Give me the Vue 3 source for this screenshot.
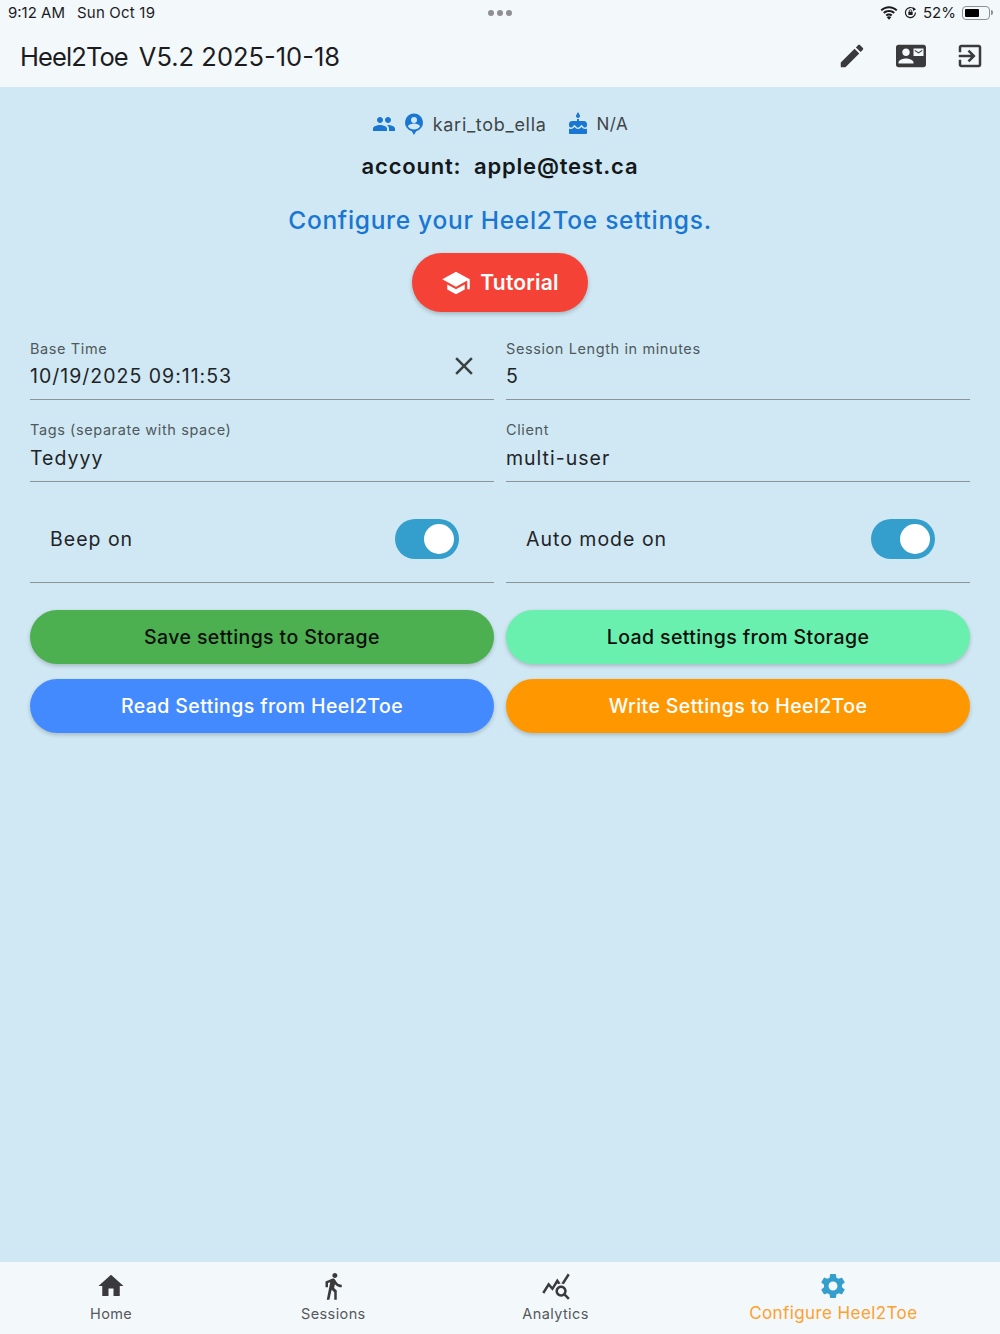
<template>
  <div class="screen">
    <header class="top">
      <div class="status">
        <div class="status-left">
          <span>9:12 AM</span>
          <span class="date">Sun Oct 19</span>
        </div>
        <div class="dots"><i></i><i></i><i></i></div>
        <div class="status-right">
          <svg class="wifi" viewBox="0 0 20 15" width="18" height="14">
            <path d="M10 2.2c3 0 5.800 1.200 7.900 3.200l1.500-1.600C16.900 1.400 13.600 0 10 0S3.100 1.400.6 3.800l1.500 1.600C4.200 3.400 7 2.200 10 2.200z" />
            <path d="M10 6.300c1.900 0 3.700.7 5 2l1.500-1.600C14.800 5 12.500 4.100 10 4.100S5.200 5 3.500 6.700L5 8.300c1.300-1.300 3.100-2 5-2z" />
            <path d="M10 10.200c.9 0 1.700.3 2.300.9l1.500-1.600c-1-1-2.300-1.500-3.800-1.500s-2.800.5-3.800 1.500l1.500 1.600c.6-.6 1.400-.9 2.300-.9z" />
            <path d="M7.500 12.200 10 15l2.500-2.800c-.6-.6-1.500-1-2.500-1s-1.900.4-2.500 1z" />
          </svg>
          <svg class="lock" viewBox="0 0 14 14" width="13" height="13">
            <path d="M12.300 7A5.400 5.400 0 1 1 10.700 3.200" fill="none" stroke="#1c1c1e" stroke-width="1.300" />
            <path d="M9.400 1.200 13 3.400 9.800 5.400z" fill="#1c1c1e" />
            <rect x="4.700" y="6.300" width="4.600" height="3.500" rx=".5" fill="#1c1c1e" />
            <path d="M5.600 6.500V5.500a1.400 1.400 0 0 1 2.800 0v1" fill="none" stroke="#1c1c1e" stroke-width=".9" />
          </svg>
          <span class="pct">52%</span>
          <div class="battery"><b></b></div>
          <div class="nub"></div>
        </div>
      </div>
      <div class="appbar">
        <h1><span class="brand">Heel2Toe</span><span>V5.2 2025-10-18</span></h1>
        <div class="actions">
          <svg viewBox="0 0 24 24" width="30" height="30"><path :d="icons.edit" /></svg>
          <svg viewBox="0 0 24 24" width="30" height="30"><path :d="icons.contact" /></svg>
          <svg viewBox="0 0 24 24" width="30" height="30"><path :d="icons.exit" /></svg>
        </div>
      </div>
    </header>

    <main class="content">
      <div class="user-row">
        <svg viewBox="0 0 24 24" width="24" height="24"><path :d="icons.people" /></svg>
        <svg viewBox="0 0 24 24" width="24" height="24" class="pin"><path fill-rule="evenodd" :d="icons.pin" /></svg>
        <span class="user-name">kari_tob_ella</span>
        <svg viewBox="0 0 24 24" width="24" height="24" class="cake"><path :d="icons.cake" /></svg>
        <span class="user-age">N/A</span>
      </div>
      <div class="account">account:&nbsp; apple@test.ca</div>
      <div class="configure">Configure your Heel2Toe settings.</div>
      <button type="button" class="tutorial">
        <svg viewBox="0 0 24 24" width="30" height="30"><path :d="icons.school" /></svg>
        <span>Tutorial</span>
      </button>

      <div class="form">
        <div v-for="field in fields" :key="field.label" class="field">
          <span class="field-label">{{ field.label }}</span>
          <span class="field-value">{{ field.value }}</span>
          <svg v-if="field.clear" class="clear" viewBox="0 0 24 24" width="30" height="30"><path :d="icons.close" /></svg>
        </div>
        <div v-for="toggle in toggles" :key="toggle" class="toggle-row">
          <span>{{ toggle }}</span>
          <div class="switch"><i></i></div>
        </div>
      </div>

      <div class="buttons">
        <button v-for="btn in buttons" :key="btn.label" type="button" class="pill" :class="btn.cls">{{ btn.label }}</button>
      </div>
    </main>

    <nav class="bottom">
      <div v-for="tab in tabs" :key="tab.label" class="tab" :class="{ active: tab.active }">
        <svg viewBox="0 0 24 24" width="30" height="30"><path :d="tab.icon" /></svg>
        <span>{{ tab.label }}</span>
      </div>
    </nav>
  </div>
</template>

<script setup>
const icons = {
  edit: 'M3 17.25V21h3.75L17.81 9.94l-3.75-3.75L3 17.25zM20.71 7.04c.39-.39.39-1.02 0-1.41l-2.34-2.34c-.39-.39-1.02-.39-1.41 0l-1.83 1.83 3.75 3.75 1.83-1.83z',
  contact: 'M21 8V7l-3 2-3-2v1l3 2 3-2zm1-5H2C.9 3 0 3.9 0 5v14c0 1.1.9 2 2 2h20c1.1 0 1.99-.9 1.99-2L24 5c0-1.1-.9-2-2-2zM8 6c1.66 0 3 1.34 3 3s-1.34 3-3 3-3-1.34-3-3 1.34-3 3-3zm6 12H2v-1c0-2 4-3.1 6-3.1s6 1.100 6 3.100v1zm8-6h-8V6h8v6z',
  exit: 'M10.090 15.590L11.500 17l5-5-5-5-1.410 1.410L12.670 11H3v2h9.670l-2.580 2.590zM19 3H5c-1.110 0-2 .9-2 2v4h2V5h14v14H5v-4H3v4c0 1.100.89 2 2 2h14c1.100 0 2-.9 2-2V5c0-1.100-.9-2-2-2z',
  people: 'M16 11c1.66 0 2.99-1.34 2.99-3S17.66 5 16 5c-1.66 0-3 1.34-3 3s1.34 3 3 3zm-8 0c1.66 0 2.99-1.34 2.99-3S9.66 5 8 5C6.34 5 5 6.34 5 8s1.34 3 3 3zm0 2c-2.33 0-7 1.17-7 3.5V19h14v-2.5c0-2.33-4.67-3.5-7-3.5zm8 0c-.29 0-.62.02-.97.05 1.16.84 1.97 1.97 1.97 3.45V19h6v-2.5c0-2.33-4.67-3.5-7-3.5z',
  pin: 'M12 1.500a9 9 0 0 0-2.200 17.730L12 23l2.200-3.770A9 9 0 0 0 12 1.500zM12 5a3 3 0 1 1 0 6 3 3 0 0 1 0-6zM12 17.500c-2.500 0-4.700-1.200-6-3 .1-2 4-3 6-3s5.900 1 6 3c-1.300 1.800-3.500 3-6 3z',
  cake: 'M12 6c1.11 0 2-.9 2-2 0-.38-.1-.73-.29-1.030L12 0l-1.710 2.970c-.19.3-.29.65-.29 1.030 0 1.100.9 2 2 2zm4.600 9.990l-1.070-1.070-1.080 1.070c-1.300 1.300-3.580 1.310-4.890 0l-1.070-1.070-1.090 1.070C6.750 16.640 5.880 17 4.960 17c-.73 0-1.400-.23-1.960-.61V21c0 .55.45 1 1 1h16c.55 0 1-.45 1-1v-4.610c-.56.38-1.230.61-1.960.61-.92 0-1.790-.36-2.440-1.010zM18 9h-5V7h-2v2H6c-1.660 0-3 1.340-3 3v1.540c0 1.080.88 1.960 1.960 1.960.52 0 1.020-.2 1.380-.57l2.140-2.130 2.130 2.130c.74.74 2.030.74 2.770 0l2.140-2.130 2.130 2.130c.37.37.86.57 1.380.57 1.080 0 1.960-.88 1.960-1.960V12C21 10.340 19.660 9 18 9z',
  school: 'M5 13.180v4L12 21l7-3.820v-4L12 17l-7-3.820zM12 3L1 9l11 6 9-4.910V17h2V9L12 3z',
  close: 'M19 6.410L17.590 5 12 10.590 6.410 5 5 6.410 10.590 12 5 17.590 6.410 19 12 13.410 17.590 19 19 17.590 13.410 12z',
  home: 'M10 20v-6h4v6h5v-8h3L12 3 2 12h3v8z',
  walk: 'M13.500 5.500c1.100 0 2-.9 2-2s-.9-2-2-2-2 .9-2 2 .9 2 2 2zM9.800 8.900L7 23h2.100l1.800-8 2.100 2v6h2v-7.500l-2.100-2 .6-3C14.800 12 16.800 13 19 13v-2c-1.900 0-3.500-1-4.300-2.400l-1-1.600c-.4-.6-1-1-1.700-1-.3 0-.5.1-.8.1L6 8.300V13h2V9.600l1.800-.7',
  stats: 'M19.880 18.470c.44-.7.7-1.510.7-2.390 0-2.490-2.010-4.500-4.500-4.500s-4.500 2.010-4.500 4.500 2.010 4.500 4.490 4.500c.88 0 1.700-.26 2.390-.7L21.580 23 23 21.580l-3.120-3.110zm-3.800.11c-1.380 0-2.500-1.120-2.500-2.500s1.120-2.500 2.500-2.500 2.500 1.120 2.500 2.500-1.120 2.500-2.500 2.500zm-.36-8.500c-.74.02-1.450.18-2.100.45l-.55-.83-3.800 6.180-3.010-3.520-3.630 5.810L1 17l5-8 3 3.500L13 6l2.720 4.080zm2.590.5c-.64-.28-1.330-.45-2.050-.49L21.380 2 23 3.180l-4.690 7.400z',
  settings: 'M19.140 12.940c.04-.3.06-.61.06-.94 0-.32-.02-.64-.07-.94l2.030-1.580c.18-.14.23-.41.12-.61l-1.920-3.320c-.12-.22-.37-.29-.59-.22l-2.390.96c-.5-.38-1.030-.7-1.620-.94l-.36-2.540c-.04-.24-.24-.41-.48-.41h-3.840c-.24 0-.43.17-.47.41l-.36 2.540c-.59.24-1.130.57-1.620.94l-2.390-.96c-.22-.08-.47 0-.59.22L2.740 8.870c-.12.21-.08.47.12.61l2.030 1.580c-.05.3-.09.63-.09.94s.02.64.07.94l-2.030 1.580c-.18.14-.23.41-.12.61l1.920 3.320c.12.22.37.29.59.22l2.390-.96c.5.38 1.030.7 1.620.94l.36 2.540c.05.24.24.41.48.41h3.840c.24 0 .44-.17.47-.41l.36-2.540c.59-.24 1.130-.56 1.620-.94l2.390.96c.22.08.47 0 .59-.22l1.920-3.320c.12-.22.07-.47-.12-.61l-2.010-1.580zM12 15.600c-1.980 0-3.600-1.620-3.600-3.600s1.620-3.600 3.600-3.600 3.600 1.620 3.600 3.600-1.620 3.600-3.600 3.600z'
}

const fields = [
  { label: 'Base Time', value: '10/19/2025 09:11:53', clear: true },
  { label: 'Session Length in minutes', value: '5' },
  { label: 'Tags (separate with space)', value: 'Tedyyy' },
  { label: 'Client', value: 'multi-user' }
]

const toggles = ['Beep on', 'Auto mode on']

const buttons = [
  { label: 'Save settings to Storage', cls: 'save' },
  { label: 'Load settings from Storage', cls: 'load' },
  { label: 'Read Settings from Heel2Toe', cls: 'read' },
  { label: 'Write Settings to Heel2Toe', cls: 'write' }
]

const tabs = [
  { label: 'Home', icon: icons.home },
  { label: 'Sessions', icon: icons.walk },
  { label: 'Analytics', icon: icons.stats },
  { label: 'Configure Heel2Toe', icon: icons.settings, active: true }
]
</script>

<style>
html,
body {
  margin: 0;
  background: #cfe8f3;
}
</style>

<style scoped>
.screen {
  width: 1000px;
  height: 1334px;
  display: flex;
  flex-direction: column;
  overflow: hidden;
  background: #cfe8f3;
  color: #1c1c1e;
  font-family: Inter, "Liberation Sans", sans-serif;
}

.top {
  height: 87px;
  flex: none;
  background: #f3f8fb;
}

.status {
  height: 25px;
  display: grid;
  grid-template-columns: 1fr auto 1fr;
  align-items: center;
  padding: 0 7px 0 8px;
  font-size: 15px;
  color: #1c1c1e;
}

.status-left {
  display: flex;
  gap: 12px;
}

.date {
  letter-spacing: 0.2px;
}

.dots {
  display: flex;
  gap: 3px;
  margin-left: -1px;
}

.dots i {
  width: 6px;
  height: 6px;
  border-radius: 50%;
  background: #8e8e93;
}

.status-right {
  display: flex;
  justify-content: flex-end;
  align-items: center;
}

.wifi {
  fill: #1c1c1e;
  margin-right: 6px;
}

.lock {
  margin-right: 6px;
}

.pct {
  font-size: 15px;
  margin-right: 6px;
}

.battery {
  width: 28px;
  height: 14px;
  box-sizing: border-box;
  padding: 2px;
  border: 1px solid #8e8e93;
  border-radius: 4px;
}

.battery b {
  display: block;
  width: 14px;
  height: 100%;
  border-radius: 1px;
  background: #000;
}

.nub {
  width: 2px;
  height: 5px;
  margin-left: 1px;
  border-radius: 0 2px 2px 0;
  background: #8e8e93;
}

.appbar {
  height: 62px;
  display: flex;
  align-items: center;
  justify-content: space-between;
  padding: 0 15px 0 20px;
}

h1 {
  margin: 0;
  display: flex;
  gap: 11px;
  font-size: 25.500px;
  font-weight: 400;
  color: #1c1c1e;
}

.brand {
  letter-spacing: -0.9px;
}

.actions {
  display: flex;
  gap: 29px;
}

.actions svg {
  fill: #3a3a3c;
}

.content {
  flex: 1;
  display: flex;
  flex-direction: column;
  align-items: center;
  padding: 25px 30px 0;
}

.user-row {
  height: 24px;
  display: flex;
  align-items: center;
  font-size: 18px;
  letter-spacing: 0.7px;
  color: #3f4448;
}

.user-row svg {
  fill: #1976d2;
}

.user-age {
  font-size: 17px;
  letter-spacing: 0.5px;
}

.pin {
  margin: 0 7px 0 6px;
}

.cake {
  margin: 0 7px 0 19px;
}

.account {
  margin-top: 16px;
  font-size: 22px;
  line-height: 28px;
  font-weight: 600;
  letter-spacing: 0.8px;
  color: #14181b;
}

.configure {
  margin-top: 25px;
  font-size: 24.500px;
  line-height: 30px;
  font-weight: 500;
  letter-spacing: 0.7px;
  color: #1976d2;
}

.tutorial {
  width: 176px;
  height: 59px;
  margin-top: 18px;
  display: flex;
  align-items: center;
  justify-content: center;
  gap: 9px;
  padding: 0;
  border: 0;
  border-radius: 30px;
  background: #f44336;
  color: #fff;
  font: 600 21px Inter, "Liberation Sans", sans-serif;
  letter-spacing: 0.2px;
  box-shadow: 0 2px 4px rgba(0, 0, 0, 0.22);
}

.tutorial svg {
  fill: #fff;
}

.form {
  width: 100%;
  margin-top: 6.500px;
  display: grid;
  grid-template-columns: 1fr 1fr;
  column-gap: 12px;
}

.field {
  position: relative;
  height: 81.500px;
  box-sizing: border-box;
  padding-top: 20px;
  border-bottom: 1px solid #8b9499;
}

.field-label {
  display: block;
  font-size: 14.500px;
  line-height: 20px;
  letter-spacing: 0.6px;
  color: #50585d;
}

.field-value {
  display: block;
  margin-top: 3.500px;
  font-size: 19.500px;
  line-height: 28px;
  letter-spacing: 1px;
  color: #1f2427;
}

.clear {
  position: absolute;
  top: 32.500px;
  right: 15px;
  fill: #3a3f42;
}

.toggle-row {
  height: 101px;
  box-sizing: border-box;
  padding: 14px 35px 0 20px;
  display: flex;
  align-items: center;
  justify-content: space-between;
  border-bottom: 1px solid #8b9499;
  font-size: 19.500px;
  letter-spacing: 1px;
  color: #1f2427;
}

.switch {
  width: 64px;
  height: 40px;
  box-sizing: border-box;
  padding: 5px;
  display: flex;
  justify-content: flex-end;
  border-radius: 20px;
  background: #349fcd;
}

.switch i {
  width: 30px;
  height: 30px;
  border-radius: 50%;
  background: #fff;
}

.buttons {
  width: 100%;
  margin-top: 27px;
  display: grid;
  grid-template-columns: 1fr 1fr;
  gap: 15px 12px;
}

.pill {
  height: 54px;
  padding: 0;
  border: 0;
  border-radius: 27px;
  font: 500 19.500px Inter, "Liberation Sans", sans-serif;
  letter-spacing: 0.4px;
  box-shadow: 0 2px 4px rgba(0, 0, 0, 0.2);
}

.save {
  background: #4caf50;
  color: #0b0f0b;
}

.load {
  background: #69f0ae;
  color: #0b0f0b;
}

.read {
  background: #448aff;
  color: #fff;
}

.write {
  background: #ff9800;
  color: #fff;
}

.bottom {
  height: 72px;
  flex: none;
  display: grid;
  grid-template-columns: 2fr 2fr 2fr 3fr;
  background: #f3f8fb;
}

.tab {
  display: flex;
  flex-direction: column;
  align-items: center;
  padding-top: 9px;
  font-size: 14.500px;
  letter-spacing: 0.4px;
  color: #55595c;
}

.tab svg {
  fill: #3a3a3c;
}

.tab span {
  margin-top: 3px;
  line-height: 20px;
}

.tab.active {
  color: #ff9f2e;
  font-size: 17px;
}

.tab.active svg {
  fill: #349fcd;
}

.tab.active span {
  margin-top: 2px;
}
</style>
